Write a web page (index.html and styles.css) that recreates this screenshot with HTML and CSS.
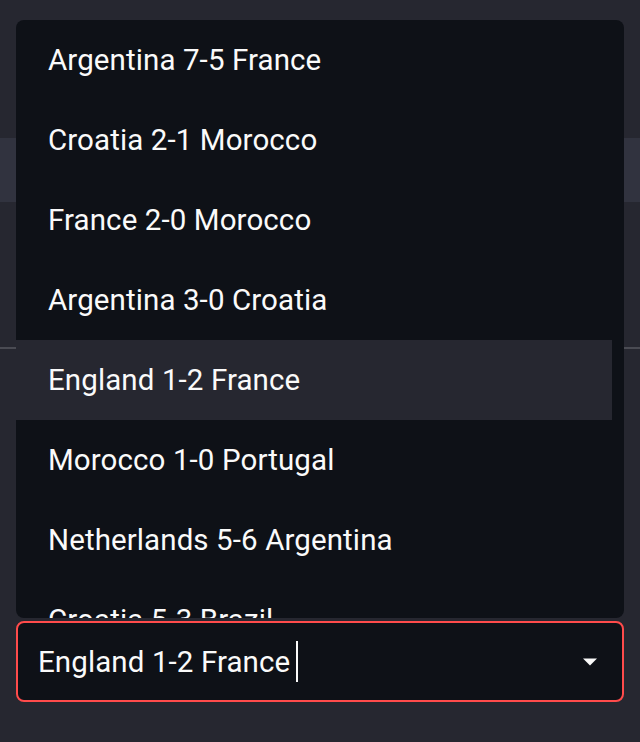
FILE: index.html
```html
<!DOCTYPE html>
<html lang="en">
<head>
<meta charset="utf-8">
<title>Select</title>
<link rel="stylesheet" href="styles.css">
</head>
<body>
<div class="page">
  <div class="backdrop">
    <div class="bd-top"></div>
    <div class="bd-header"></div>
    <div class="bd-body"></div>
    <div class="bd-line"></div>
  </div>

  <ul class="menu" role="listbox">
    <li class="option">Argentina 7-5 France</li>
    <li class="option">Croatia 2-1 Morocco</li>
    <li class="option">France 2-0 Morocco</li>
    <li class="option">Argentina 3-0 Croatia</li>
    <li class="option option-active">England 1-2 France</li>
    <li class="option">Morocco 1-0 Portugal</li>
    <li class="option">Netherlands 5-6 Argentina</li>
    <li class="option">Croatia 5-3 Brazil</li>
  </ul>

  <div class="select">
    <div class="value"><span>England 1-2 France</span><span class="caret"></span></div>
    <svg class="arrow" width="14" height="8" viewBox="0 0 14 8"><path d="M0 0.5 L14 0.5 L7 7.5 Z" fill="#fafafa"/></svg>
  </div>
</div>
</body>
</html>
```
FILE: styles.css
```css
* { box-sizing: border-box; }
html, body {
  margin: 0;
  padding: 0;
  background: #262730;
  width: 640px;
  height: 742px;
  overflow: hidden;
}
.page {
  position: relative;
  width: 640px;
  height: 742px;
  font-family: Roboto, "Noto Sans", sans-serif;
  color: #fafafa;
}
.backdrop {
  display: flex;
  flex-direction: column;
}
.bd-top { height: 138px; }
.bd-header { height: 64px; background: #31333f; }
.bd-body { height: 145px; }
.bd-line { height: 2px; background: #4a4b53; }

.menu {
  position: absolute;
  top: 20px;
  left: 16px;
  right: 16px;
  height: 598px;
  margin: 0;
  padding: 0 12px 0 0;
  list-style: none;
  background: #0e1117;
  border-radius: 8px;
  overflow: hidden;
}
.option {
  height: 80px;
  display: flex;
  align-items: center;
  padding-left: 32px;
  font-size: 29.5px;
  letter-spacing: 0.1px;
  white-space: nowrap;
}
.option-active { background: #262730; }

.select {
  position: absolute;
  left: 16px;
  right: 16px;
  top: 621px;
  height: 81px;
  border: 2px solid #ff4b4b;
  border-radius: 8px;
  background: #0e1117;
  display: flex;
  align-items: center;
  justify-content: space-between;
  padding: 0 25px 0 20px;
}
.value {
  display: flex;
  align-items: center;
  font-size: 29.5px;
  letter-spacing: 0.1px;
  white-space: nowrap;
}
.caret {
  display: inline-block;
  width: 2px;
  height: 41px;
  background: #fafafa;
  margin-left: 6px;
}
.arrow { display: block; margin-top: 1px; }
```
